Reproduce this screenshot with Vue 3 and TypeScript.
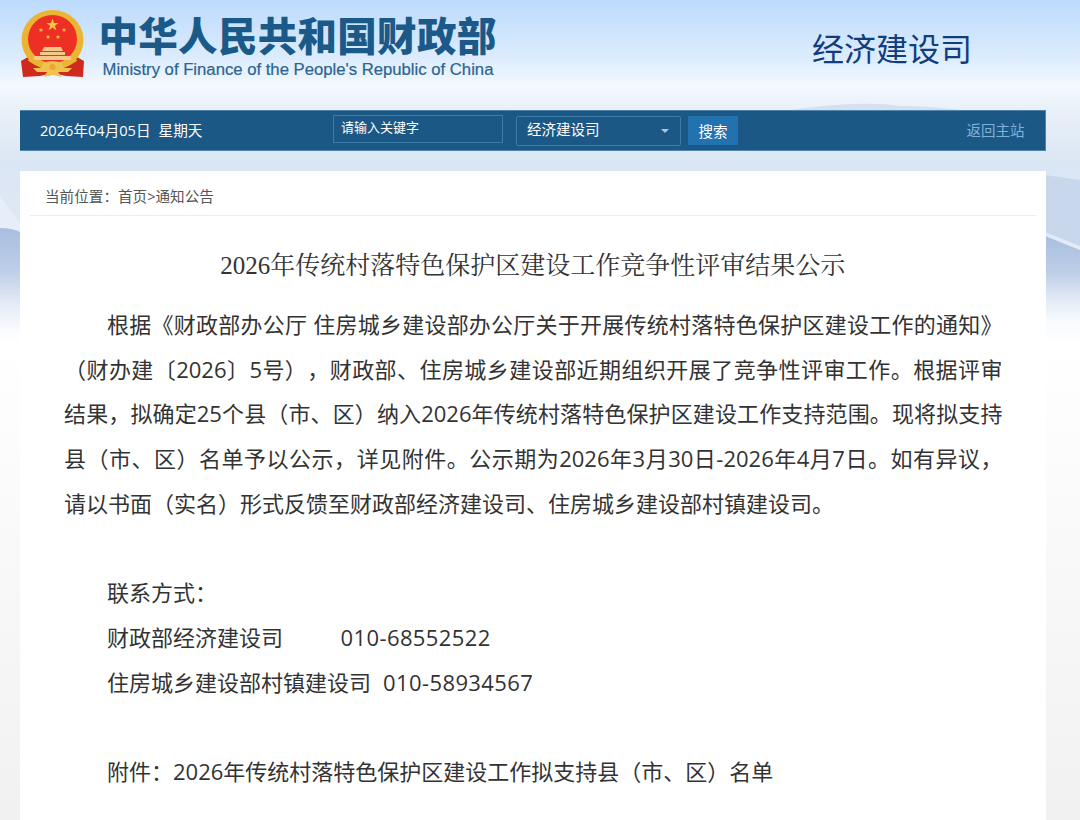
<template>
  <div class="page">
    <svg class="backdrop" width="1080" height="820" viewBox="0 0 1080 820" aria-hidden="true">
      <defs>
        <linearGradient id="sky" x1="0" y1="0" x2="0" y2="1">
          <stop offset="0" stop-color="#bcdbfc" />
          <stop offset="0.07" stop-color="#dcecfd" />
          <stop offset="0.105" stop-color="#f3f9fe" />
          <stop offset="0.13" stop-color="#eaf1f9" />
          <stop offset="0.2" stop-color="#dbe6f4" />
          <stop offset="0.28" stop-color="#dfe8f5" />
          <stop offset="0.42" stop-color="#ffffff" />
          <stop offset="1" stop-color="#f1f1f1" />
        </linearGradient>
        <linearGradient id="hill" x1="0" y1="0" x2="0" y2="1">
          <stop offset="0" stop-color="#a9bfe0" />
          <stop offset="0.4" stop-color="#bccde7" />
          <stop offset="0.75" stop-color="#e6edf7" />
          <stop offset="1" stop-color="#fbfcfe" />
        </linearGradient>
      </defs>
      <rect width="1080" height="820" fill="url(#sky)" />
      <path d="M0 196 L20 224 L20 232 L0 228Z" fill="#e7eef7" />
      <path d="M0 228 Q12 228 20 232 L20 332 L0 332Z" fill="url(#hill)" />
      <path d="M1045 175 L1080 180 L1080 246 L1045 232Z" fill="#c8d7ec" />
      <path d="M1045 236 L1080 250 L1080 325 L1045 325Z" fill="url(#hill)" />
      <path d="M790 110 Q860 100 900 106 Q930 106 960 110Z" fill="#d5e1f0" />
    </svg>

    <header class="top">
      <div class="brand">
        <svg class="emblem" width="66" height="70" viewBox="0 0 66 70">
          <defs>
            <polygon id="star" points="0,-1 .225,-.309 .951,-.309 .363,.118 .588,.809 0,.382 -.588,.809 -.363,.118 -.951,-.309 -.225,-.309" fill="#f6c544" />
          </defs>
          <path d="M8 47 L1 51 L3 67 L20 66 L33 63 L46 66 L63 67 L64 51 L57 47 L33 61Z" fill="#cf2a1d" />
          <ellipse cx="32.500" cy="30" rx="31" ry="30" fill="#ebb534" />
          <ellipse cx="32.500" cy="29" rx="24.500" ry="24" fill="#ee2f24" />
          <use href="#star" transform="translate(32.500 15) scale(6.500)" />
          <use href="#star" transform="translate(21 20) scale(2.600)" />
          <use href="#star" transform="translate(44 20) scale(2.600)" />
          <use href="#star" transform="translate(28 27) scale(2.600)" />
          <use href="#star" transform="translate(38 27) scale(2.600)" />
          <g fill="#f6c98a">
            <path d="M24 37h17l2 4H22z" />
            <path d="M20 42h25v3H20z" />
            <path d="M14 46h37v4H14z" />
          </g>
          <path d="M9 49 Q32 66 56 49" fill="none" stroke="#ebb534" stroke-width="4" />
          <path d="M23 53 Q32 49 42 53 L44 58 L52 58 L48 62 L38 62 L42 67 L33 65 L24 67 L27 62 L17 62 L13 58 L21 58Z" fill="#f0c34e" />
          <circle cx="32.500" cy="57" r="3" fill="#e9a82e" />
        </svg>
        <div class="brand-text">
          <div class="brand-cn">中华人民共和国财政部</div>
          <div class="brand-en">Ministry of Finance of the People's Republic of China</div>
        </div>
      </div>
      <div class="dept">经济建设司</div>
    </header>

    <nav class="bar">
      <span class="date">2026年04月05日<span class="week">星期天</span></span>
      <div class="search">
        <div class="kw">请输入关键字</div>
        <div class="sel">经济建设司<i class="caret"></i></div>
        <button class="go">搜索</button>
      </div>
      <a class="back">返回主站</a>
    </nav>

    <main class="card">
      <div class="crumb">当前位置：首页&gt;通知公告</div>
      <h1 class="title">2026年传统村落特色保护区建设工作竞争性评审结果公示</h1>
      <div class="body">
        <p class="lead">根据《财政部办公厅 住房城乡建设部办公厅关于开展传统村落特色保护区建设工作的通知》（财办建〔2026〕5号），财政部、住房城乡建设部近期组织开展了竞争性评审工作。根据评审结果，拟确定25个县（市、区）纳入2026年传统村落特色保护区建设工作支持范围。现将拟支持县（市、区）名单予以公示，详见附件。公示期为2026年3月30日-2026年4月7日。如有异议，请以书面（实名）形式反馈至财政部经济建设司、住房城乡建设部村镇建设司。</p>
        <p class="blank"></p>
        <p class="item">联系方式：</p>
        <p class="item"><span class="org">财政部经济建设司</span><span class="phone">010-68552522</span></p>
        <p class="item"><span>住房城乡建设部村镇建设司</span><span class="phone tel">010-58934567</span></p>
        <p class="blank"></p>
        <p class="item">附件：2026年传统村落特色保护区建设工作拟支持县（市、区）名单</p>
      </div>
    </main>
  </div>
</template>

<script setup lang="ts">
</script>

<style>
html, body { margin: 0; height: 100%; overflow: hidden; background: #f1f1f1; }
</style>

<style scoped>
.page { position: relative; width: 1080px; height: 820px; overflow: hidden; font-family: "Open Sans", "Noto Sans CJK SC", sans-serif; text-spacing-trim: space-all; }
.backdrop { position: absolute; left: 0; top: 0; }
.top { position: relative; display: flex; height: 110px; }
.brand { display: flex; width: 812px; padding: 10px 0 0 20px; box-sizing: border-box; }
.emblem { flex: none; }
.brand-text { margin-left: 12.500px; }
.brand-cn { font-family: "Noto Sans CJK SC", sans-serif; font-weight: 900; font-size: 39.500px; line-height: 50px; letter-spacing: .3px; color: #1b5a88; white-space: nowrap; margin-top: -1px; }
.brand-en { font-family: "Liberation Sans", sans-serif; font-size: 16.700px; line-height: 18px; color: #2c6490; margin-top: 2px; margin-left: 4px; white-space: nowrap; -webkit-text-stroke: 0.2px #2c6490; }
.dept { font-family: "Noto Sans CJK SC", sans-serif; font-size: 32px; line-height: 40px; color: #113d7f; margin-top: 27px; }
.bar { position: relative; display: flex; align-items: center; height: 41px; box-sizing: border-box; margin: 0 34.500px 0 20px; background: #1b5885; border: 1px solid #4f84ad; border-width: 1px 1px 1px 0; color: #fff; font-size: 14.500px; }
.date { width: 313px; padding: 0 0 2px 20px; box-sizing: border-box; flex: none; font-size: 14.600px; }
.week { margin-left: 8px; }
.search { display: flex; align-items: center; }
.kw { width: 170px; height: 28px; box-sizing: border-box; border: 1px solid #3d7bab; padding-left: 7px; font-size: 13px; line-height: 22px; margin-top: -3px; }
.sel { position: relative; width: 165px; height: 30px; box-sizing: border-box; border: 1px solid #3d7bab; border-radius: 2px; margin-left: 13px; padding-left: 10px; line-height: 26px; }
.caret { position: absolute; right: 11px; top: 12px; border: 4px solid transparent; border-top: 4px solid #a9c6dd; }
.go { width: 50px; height: 29px; margin-left: 7px; border: 0; background: #2272b0; color: #fff; font: inherit; padding: 0; }
.back { margin-left: auto; margin-right: 20px; padding-bottom: 2px; color: #7fb2d9; }
.card { position: relative; margin: 20px 34.500px 0 20px; height: 700px; background: #fff; padding: 0 10px; box-sizing: border-box; }
.crumb { height: 44px; line-height: 50px; border-bottom: 1px solid #eceff1; padding-left: 15px; font-size: 14.600px; color: #555; }
.title { margin: 0; padding-top: 30px; text-align: center; font-family: "Liberation Serif", "Noto Serif CJK SC", "Noto Sans CJK SC", serif; font-weight: 400; font-size: 25px; line-height: 40px; color: #333; }
.body { padding: 16px 33px 0 34px; font-size: 22px; line-height: 44.700px; color: #333; }
.body p { margin: 0; }
.lead { text-indent: 43px; text-align: justify; }
.item { padding-left: 43px; white-space: nowrap; }
.blank { height: 44.700px; }
.org { display: inline-block; width: 233.500px; }
.phone { letter-spacing: .4px; }
.tel { margin-left: 12px; }
</style>
